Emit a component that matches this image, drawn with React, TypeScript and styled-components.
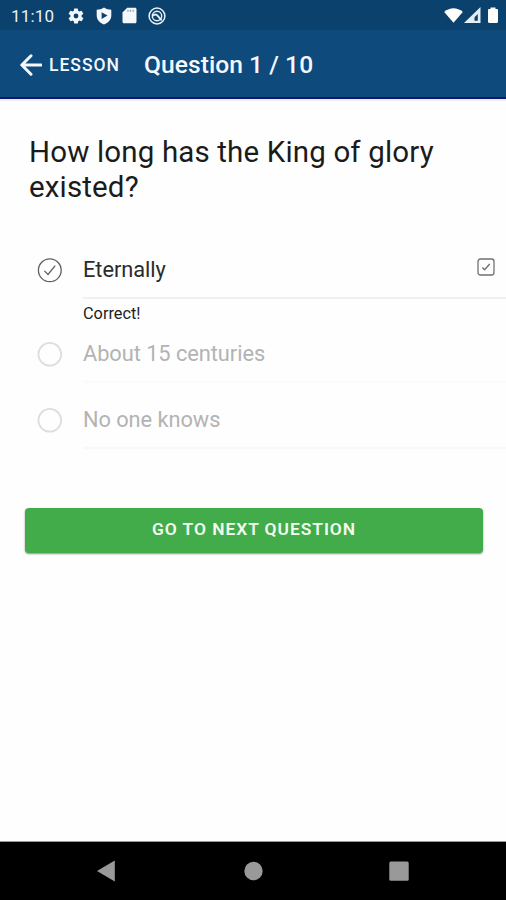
import React from "react";
import styled, { createGlobalStyle } from "styled-components";

const GlobalStyle = createGlobalStyle`
  * { box-sizing: border-box; }
  body { margin: 0; background: #fff; font-family: Roboto, "Liberation Sans", sans-serif; }
`;

const Screen = styled.div`
  width: 506px;
  height: 900px;
  display: flex;
  flex-direction: column;
  overflow: hidden;
  background: #fefefe;
`;

const StatusBar = styled.div`
  height: 30px;
  flex: none;
  display: flex;
  align-items: center;
  padding: 1px 7px 0 11px;
  background: #0b416d;
  color: #e9f1f7;
`;

const Clock = styled.span`
  width: 56px;
  font-size: 17px;
  line-height: 20px;
  letter-spacing: 0.2px;
`;

const StatusIcons = styled.div`
  display: flex;
  align-items: center;
  gap: 10.5px;
  svg { display: block; }
`;

const Spacer = styled.div`
  flex: 1;
`;

const Toolbar = styled.header`
  height: 71px;
  flex: none;
  display: flex;
  align-items: center;
  padding: 0 0 0 20px;
  background: #0e4a7b;
  color: #f4f8fc;
  border-bottom: 2px solid #f0ecf2;
  box-shadow: inset 0 -2px 0 #0b1a70;
`;

const BackButton = styled.button`
  display: flex;
  align-items: center;
  gap: 7px;
  width: 124px;
  padding: 0;
  border: 0;
  background: none;
  color: inherit;
  font: 500 17.5px/24px Roboto, sans-serif;
  letter-spacing: 1px;
  svg { display: block; }
`;

const Title = styled.h1`
  margin: 1px 0 0;
  font-size: 24.6px;
  line-height: 30px;
  font-weight: 500;
  letter-spacing: 0.05px;
`;

const Content = styled.main`
  flex: 1;
  display: flex;
  flex-direction: column;
`;

const Question = styled.h2`
  margin: 34px 30px 0 29px;
  font-size: 29.5px;
  line-height: 35px;
  font-weight: 400;
  letter-spacing: 0.15px;
  color: #1b1b1b;
`;

const Answers = styled.div`
  margin-top: 36px;
  display: flex;
  flex-direction: column;
`;

const Answer = styled.div`
  height: 58px;
  display: flex;
  padding-left: 37px;
`;

const AnswerMark = styled.div`
  width: 46px;
  display: flex;
  align-items: center;
  svg { display: block; }
`;

const AnswerBody = styled.div<{ $line: string; $muted?: boolean }>`
  flex: 1;
  display: flex;
  align-items: center;
  justify-content: space-between;
  padding: ${(p) => (p.$muted ? "1px" : "0")} 11.5px 0 0;
  border-bottom: 2px solid ${(p) => p.$line};
  color: ${(p) => (p.$muted ? "#b3b3b3" : "#2b2b2b")};
  font-size: 21.8px;
  line-height: 28px;
  letter-spacing: -0.05px;
  svg { display: block; margin-bottom: 4px; }
`;

const AnswerText = styled.span`
  padding-top: 1px;
`;

const Feedback = styled.div`
  height: 26px;
  padding: 5px 0 0 83px;
  font-size: 16.3px;
  line-height: 20px;
  color: #1d1d1d;
`;

const RowGap = styled.div`
  height: 7.6px;
`;

const NextButton = styled.button`
  width: 458px;
  height: 45px;
  margin: 59.4px 0 0 25px;
  padding: 0 0 2px;
  border: 0;
  border-radius: 4px;
  background: #42ac4a;
  box-shadow: 0 1px 2px rgba(0, 0, 0, 0.45);
  color: #f1fbf0;
  font: 600 17.4px/22px Roboto, sans-serif;
  letter-spacing: 0.95px;
`;

const NavBar = styled.nav`
  height: 59px;
  flex: none;
  display: flex;
  align-items: center;
  padding: 0 97px;
  justify-content: space-between;
  background: #000;
  border-top: 1px solid #999;
  svg { display: block; }
`;

const Gear = () => (
  <svg width="18" height="18" viewBox="0 0 24 24" fill="#f4f8fc">
    <path d="M19.400 13a7.500 7.500 0 0 0 0-2l2.100-1.600c.2-.2.3-.5.100-.7l-2-3.500c-.1-.2-.4-.3-.6-.2l-2.500 1a7.700 7.700 0 0 0-1.700-1l-.4-2.600A.5.5 0 0 0 14 2h-4c-.3 0-.5.2-.5.4l-.4 2.600c-.6.300-1.200.6-1.700 1l-2.500-1c-.2-.1-.5 0-.6.200l-2 3.500c-.1.200-.1.500.1.700L4.600 11a7.500 7.500 0 0 0 0 2l-2.200 1.600c-.2.200-.2.500-.1.700l2 3.500c.1.200.4.300.6.200l2.500-1c.5.400 1.100.7 1.700 1l.4 2.600c0 .200.200.4.500.4h4c.3 0 .5-.2.500-.4l.4-2.600c.6-.3 1.200-.6 1.700-1l2.500 1c.2.100.5 0 .6-.2l2-3.500c.1-.2.100-.5-.1-.7zM12 15.200a3.200 3.200 0 1 1 0-6.400 3.200 3.200 0 0 1 0 6.400z" />
  </svg>
);

const Shield = () => (
  <svg width="16" height="18" viewBox="0 0 16 18">
    <path d="M8 .5c2.200 1.700 4.700 2.200 7.300 2.200v5.800c0 4.200-3 7.200-7.300 9-4.300-1.800-7.300-4.800-7.300-9V2.700C3.300 2.700 5.800 2.200 8 .5z" fill="#f4f8fc" />
    <path d="M5.600 5.200 11.500 8.600 5.600 12z" fill="#0b416d" />
  </svg>
);

const SdCard = () => (
  <svg width="15" height="17" viewBox="0 0 15 17">
    <path d="M5.200.7H13c.9 0 1.500.600 1.500 1.500v12.600c0 .9-.6 1.500-1.500 1.500H2c-.9 0-1.500-.6-1.500-1.500V5.500z" fill="#f4f8fc" />
    <path d="M6 2.800v2M8.500 2.800v2M11.200 2.800v2" stroke="#8ba3ba" strokeWidth="1.300" />
  </svg>
);

const Radar = () => (
  <svg width="18" height="18" viewBox="0 0 18 18" fill="none" stroke="#e9f1f7">
    <circle cx="9" cy="9" r="7.900" strokeWidth="1.500" />
    <circle cx="9" cy="9" r="4.700" strokeWidth="1.400" />
    <path d="M5 8.700c1.700-1.400 3.500-1.300 4.700.1l4 4.500" strokeWidth="1.900" />
  </svg>
);

const Signals = () => (
  <svg width="55" height="18" viewBox="0 0 55 18">
    <path d="M.2 5C5.800.1 13.200.1 18.800 5L9.500 15.700z" fill="#fff" />
    <path fillRule="evenodd" d="M20 16 36.500 0v16zM30.500 13.700H33.800V7L30.500 10.300z" fill="#e4edf5" />
    <path d="M46.500 2V.5h5V2h1.300c.7 0 1.200.5 1.200 1.200v11.600c0 .7-.5 1.200-1.200 1.200h-7.600c-.7 0-1.200-.5-1.200-1.200V3.200c0-.7.5-1.200 1.200-1.200z" fill="#fff" />
  </svg>
);

const BackArrow = () => (
  <svg width="22" height="22" viewBox="0 0 22 22" fill="none" stroke="#f4f8fc" strokeWidth="3">
    <path d="M21 11H2M11 1.800 1.800 11l9.200 9.200" strokeLinecap="round" strokeLinejoin="round" />
  </svg>
);

const Choice = ({ checked }: { checked?: boolean }) => (
  <svg width="26" height="26" viewBox="0 0 26 26" fill="none" stroke={checked ? "#606060" : "#dedede"}>
    <circle cx="12.800" cy="13.300" r="11.400" strokeWidth={checked ? 1.300 : 1.800} />
    {checked && <path d="m7.400 13.900 3.600 3.600 7.200-8.800" strokeWidth="1.300" />}
  </svg>
);

const Checkbox = () => (
  <svg width="18" height="18" viewBox="0 0 18 18" fill="none" stroke="#707070">
    <rect x="1" y="1" width="16" height="16" rx="2.500" strokeWidth="1.300" />
    <path d="m5.300 9.500 2.300 2.200 5.100-5.700" strokeWidth="1.400" />
  </svg>
);

const BackKey = () => (
  <svg width="18" height="22" viewBox="0 0 18 22">
    <path d="M0 11 17.800.5v21z" fill="#999" />
  </svg>
);

const HomeKey = () => (
  <svg width="17" height="20" viewBox="0 0 17 20" overflow="visible">
    <circle cx="9.500" cy="10" r="9.200" fill="#999" />
  </svg>
);

const RecentsKey = () => (
  <svg width="20" height="20" viewBox="0 0 20 20">
    <rect x=".3" y=".5" width="19.400" height="19.200" rx="1.500" fill="#999" />
  </svg>
);

export default function App() {
  return (
    <>
      <GlobalStyle />
      <Screen>
        <StatusBar>
          <Clock>11:10</Clock>
          <StatusIcons>
            <Gear />
            <Shield />
            <SdCard />
            <Radar />
          </StatusIcons>
          <Spacer />
          <Signals />
        </StatusBar>
        <Toolbar>
          <BackButton>
            <BackArrow />
            LESSON
          </BackButton>
          <Title>Question 1 / 10</Title>
        </Toolbar>
        <Content>
          <Question>How long has the King of glory existed?</Question>
          <Answers>
            <Answer>
              <AnswerMark><Choice checked /></AnswerMark>
              <AnswerBody $line="#f0f0f0">
                <AnswerText>Eternally</AnswerText>
                <Checkbox />
              </AnswerBody>
            </Answer>
            <Feedback>Correct!</Feedback>
            <Answer>
              <AnswerMark><Choice /></AnswerMark>
              <AnswerBody $line="#fbfbfb" $muted>
                <AnswerText>About 15 centuries</AnswerText>
              </AnswerBody>
            </Answer>
            <RowGap />
            <Answer>
              <AnswerMark><Choice /></AnswerMark>
              <AnswerBody $line="#f8f8f8" $muted>
                <AnswerText>No one knows</AnswerText>
              </AnswerBody>
            </Answer>
          </Answers>
          <NextButton>GO TO NEXT QUESTION</NextButton>
        </Content>
        <NavBar>
          <BackKey />
          <HomeKey />
          <RecentsKey />
        </NavBar>
      </Screen>
    </>
  );
}
